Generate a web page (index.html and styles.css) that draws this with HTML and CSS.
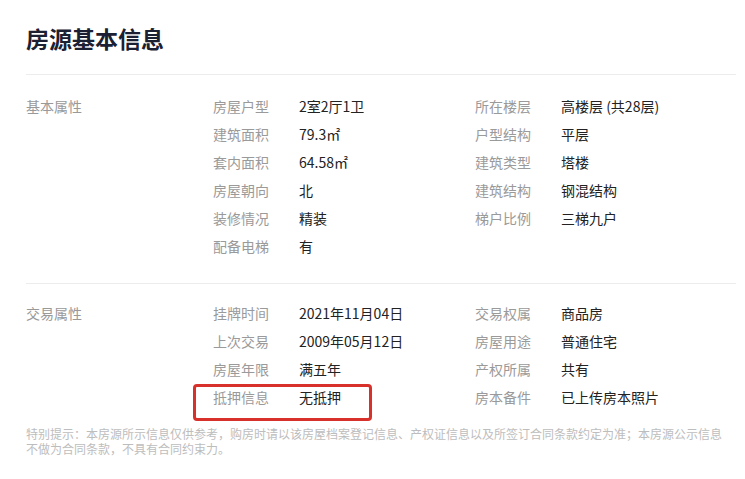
FILE: index.html
```html
<!DOCTYPE html>
<html lang="zh-CN">
<head>
    <meta charset="UTF-8">
    <meta name="viewport" content="width=device-width, initial-scale=1.0">
    <title>房源基本信息</title>
    <link rel="stylesheet" href="styles.css">
</head>
<body>

<div class="info-box">
    <div class="info-header">
        <h2>房源基本信息</h2>
    </div>

    <div class="info-section">
        <div class="section-name">基本属性</div>
        <ul class="attr-list">
            <li><span class="label">房屋户型</span><span class="value">2室2厅1卫</span></li>
            <li><span class="label">所在楼层</span><span class="value">高楼层 (共28层)</span></li>
            <li><span class="label">建筑面积</span><span class="value">79.3㎡</span></li>
            <li><span class="label">户型结构</span><span class="value">平层</span></li>
            <li><span class="label">套内面积</span><span class="value">64.58㎡</span></li>
            <li><span class="label">建筑类型</span><span class="value">塔楼</span></li>
            <li><span class="label">房屋朝向</span><span class="value">北</span></li>
            <li><span class="label">建筑结构</span><span class="value">钢混结构</span></li>
            <li><span class="label">装修情况</span><span class="value">精装</span></li>
            <li><span class="label">梯户比例</span><span class="value">三梯九户</span></li>
            <li><span class="label">配备电梯</span><span class="value">有</span></li>
        </ul>
    </div>

    <div class="info-section last">
        <div class="section-name">交易属性</div>
        <ul class="attr-list">
            <li><span class="label">挂牌时间</span><span class="value">2021年11月04日</span></li>
            <li><span class="label">交易权属</span><span class="value">商品房</span></li>
            <li><span class="label">上次交易</span><span class="value">2009年05月12日</span></li>
            <li><span class="label">房屋用途</span><span class="value">普通住宅</span></li>
            <li><span class="label">房屋年限</span><span class="value">满五年</span></li>
            <li><span class="label">产权所属</span><span class="value">共有</span></li>
            <li class="marked"><span class="label">抵押信息</span><span class="value">无抵押</span></li>
            <li><span class="label">房本备件</span><span class="value">已上传房本照片</span></li>
        </ul>
    </div>

    <p class="notice">特别提示：本房源所示信息仅供参考，购房时请以该房屋档案登记信息、产权证信息以及所签订合同条款约定为准；本房源公示信息不做为合同条款，不具有合同约束力。</p>
</div>

</body>
</html>
```

FILE: styles.css
```css
/* Global Styles */
body {
    font-family: "Noto Sans CJK SC", "Liberation Sans", sans-serif;
    margin: 0;
    padding: 0;
    background: #fff;
    color: #333;
}

.info-box {
    width: 710px;
    padding: 22px 0 0 26px;
}

.info-header {
    padding-bottom: 20px;
    border-bottom: 1px solid #ececec;
}

h2 {
    margin: 0;
    font-size: 23px;
    line-height: 32px;
    font-weight: bold;
    color: #1b2032;
}

.info-section {
    display: flex;
    padding: 17px 0 23px;
    border-bottom: 1px solid #ececec;
}

.info-section.last {
    border-bottom: none;
    padding-top: 15px;
    padding-bottom: 15px;
}

.section-name {
    width: 187px;
    flex-shrink: 0;
    font-size: 14px;
    line-height: 28px;
    color: #999;
}

.attr-list {
    list-style: none;
    margin: 0;
    padding: 0;
    display: grid;
    grid-template-columns: 262px 1fr;
    flex: 1;
}

.attr-list li {
    display: flex;
    font-size: 14px;
    line-height: 28px;
    position: relative;
}

.label {
    width: 86px;
    color: #9a9a9a;
}

.value {
    color: #222;
}

/* red annotation frame */
.marked::after {
    content: "";
    position: absolute;
    left: -20px;
    top: 1px;
    width: 173px;
    height: 31px;
    border: 3px solid #d8302b;
    border-radius: 4px;
}

.notice {
    margin: 0;
    width: 702px;
    font-size: 12px;
    line-height: 15px;
    color: #bdbdbd;
}
```
